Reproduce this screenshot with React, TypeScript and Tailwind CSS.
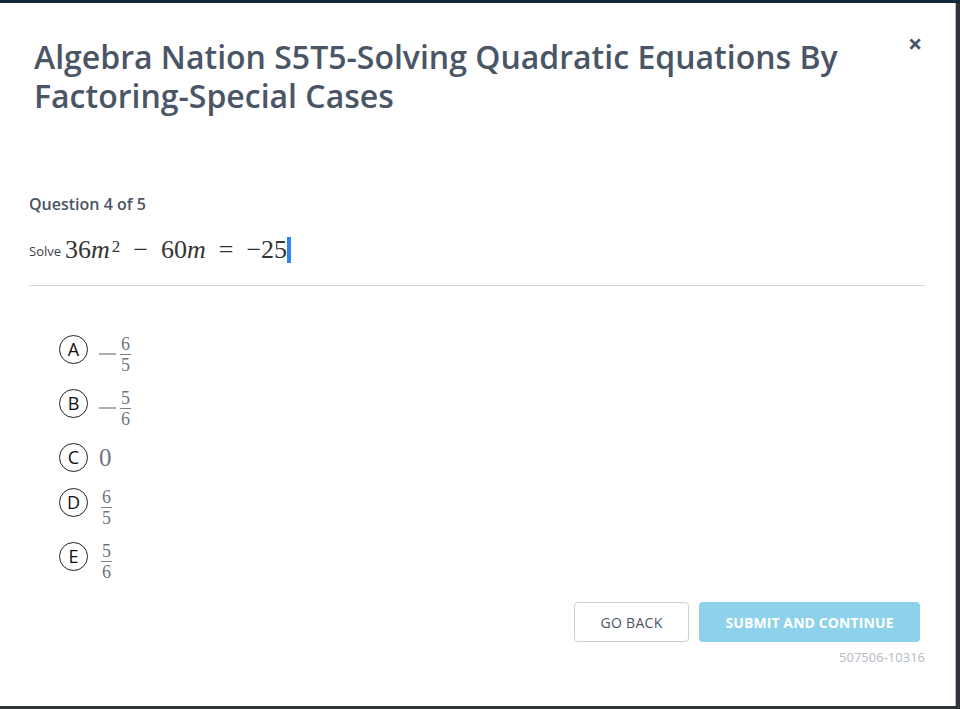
import type { ReactNode } from "react";

const sans = { fontFamily: '"Open Sans", "Noto Sans", sans-serif' };
const mathFont = { fontFamily: '"Liberation Serif", "DejaVu Serif", serif' };

function Frac({ n, d }: { n: string; d: string }) {
  return (
    <span className="inline-flex flex-col items-center leading-none text-[18px] mt-[10px]" style={mathFont}>
      <span className="px-[1px] pb-[1px]">{n}</span>
      <span className="h-px w-full bg-[#7a8089]" />
      <span className="px-[1px] pt-[1px]">{d}</span>
    </span>
  );
}

function Option({ letter, children, mt }: { letter: string; children: ReactNode; mt: string }) {
  return (
    <div className={`flex items-center h-[40px] ${mt}`}>
      <div
        className="w-[29px] h-[29px] rounded-full border-[1.5px] border-[#222] flex items-center justify-center text-[18px] font-medium text-[#111] leading-none"
        style={sans}
      >
        {letter}
      </div>
      <div className="ml-[11px] flex items-center text-[#6f757d]">{children}</div>
    </div>
  );
}

function Minus() {
  return <span className="w-[17px] h-[1.5px] bg-[#a8aeb5] mr-[4px] mt-[10px]" />;
}

export default function App() {
  return (
    <div className="w-[960px] h-[709px] bg-[#2e343a] flex flex-col overflow-hidden">
      <div className="h-[3px] bg-[#15293a] shrink-0" />
      <div className="flex-1 flex min-h-0 mb-[3px]">
        <div className="flex-1 bg-white border-r border-[#b9bec4] mr-[4px] relative" style={sans}>
          <button className="absolute left-[908px] top-[28px] text-[25px] font-bold leading-none text-[#4a5566]">×</button>

          <h1 className="pl-[34px] pt-[34px] pr-[100px] text-[32px] leading-[39px] font-semibold text-[#4a5566] tracking-[0px]">
            Algebra Nation S5T5-Solving Quadratic Equations By Factoring-Special Cases
          </h1>

          <div className="pl-[29px] pr-[30px]">
            <div className="mt-[78px] text-[16px] font-semibold text-[#4a5566] leading-[22px]">Question 4 of 5</div>

            <div className="mt-[14px] flex items-end h-[38px]">
              <span className="text-[13px] text-[#3d4148] mb-[6px] mr-[4px]">Solve</span>
              <span className="text-[26px] text-[#333] leading-none mb-[4px] whitespace-nowrap" style={mathFont}>
                36<i>m</i>
                <sup className="text-[17px] relative -top-[6px] ml-[2px]">2</sup>
                <span className="mx-[13px]">−</span>60<i>m</i>
                <span className="mx-[13px]">=</span>−25
              </span>
              <span className="w-[4px] h-[26px] bg-[#2f86e8] mb-[4px]" />
            </div>

            <div className="mt-[18px] h-px bg-[#cfd6dd]" />

            <div className="pl-[30px] mt-[43px] flex flex-col">
              <Option letter="A" mt="mt-0">
                <Minus />
                <Frac n="6" d="5" />
              </Option>
              <Option letter="B" mt="mt-[14px]">
                <Minus />
                <Frac n="5" d="6" />
              </Option>
              <Option letter="C" mt="mt-[14px]">
                <span className="text-[25px] leading-none text-[#6f757d]" style={mathFont}>0</span>
              </Option>
              <Option letter="D" mt="mt-[5px]">
                <span className="ml-[2px] flex"><Frac n="6" d="5" /></span>
              </Option>
              <Option letter="E" mt="mt-[14px]">
                <span className="ml-[2px] flex"><Frac n="5" d="6" /></span>
              </Option>
            </div>

            <div className="mt-[26px] flex justify-end gap-[10px] pr-[5px]">
              <button className="w-[115px] h-[40px] rounded-[4px] border border-[#c9d0d7] text-[14px] font-medium text-[#4a5566] tracking-[0.3px]">
                GO BACK
              </button>
              <button className="w-[221px] h-[40px] rounded-[4px] bg-[#8dd2ea] text-[14px] font-bold text-white tracking-[0.1px]">
                SUBMIT AND CONTINUE
              </button>
            </div>
            <div className="mt-[6px] text-right text-[13px] text-[#b3bac2]">507506-10316</div>
          </div>
        </div>
      </div>
    </div>
  );
}
